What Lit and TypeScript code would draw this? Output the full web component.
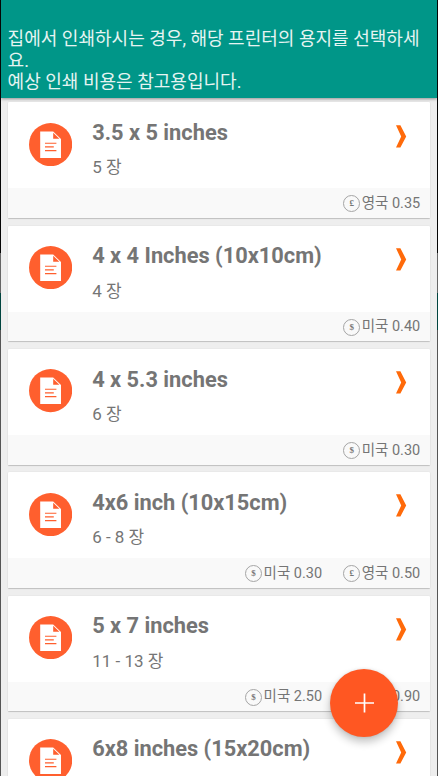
import { LitElement, html, css, svg, nothing } from 'lit';
import { customElement, property } from 'lit/decorators.js';

interface Price { sign: string; country: string; amount: string }
interface Paper { title: string; count?: string; prices: Price[] }

const us = (amount: string): Price => ({ sign: '$', country: '미국', amount });
const uk = (amount: string): Price => ({ sign: '£', country: '영국', amount });

const PAPERS: Paper[] = [
  { title: '3.5 x 5 inches', count: '5 장', prices: [uk('0.35')] },
  { title: '4 x 4 Inches (10x10cm)', count: '4 장', prices: [us('0.40')] },
  { title: '4 x 5.3 inches', count: '6 장', prices: [us('0.30')] },
  { title: '4x6 inch (10x15cm)', count: '6 - 8 장', prices: [us('0.30'), uk('0.50')] },
  { title: '5 x 7 inches', count: '11 - 13 장', prices: [us('2.50'), uk('0.90')] },
  { title: '6x8 inches (15x20cm)', prices: [] },
];

const docIcon = svg`
  <circle cx="21.6" cy="21.6" r="21.6" fill="#ff5f2e"/>
  <path d="M11.2 8.4H24.2L32 16V35H11.2Z" fill="#fff"/>
  <path d="M24.2 9.8V15.8H30.4Z" fill="#ff5f2e"/>
  <path d="M16 20.2H27.4M16 23.9H24.8M16 27.6H27.4" stroke="#ff5f2e" stroke-width="1.1" fill="none"/>`;

@customElement('paper-card')
export class PaperCard extends LitElement {
  @property({ attribute: false }) paper!: Paper;

  static styles = css`
    :host {
      display: block;
      flex: none;
      height: 115.6px;
      background: #fff;
      border-radius: 1px;
      box-shadow: 0 1px 1px rgba(0, 0, 0, 0.18), 0 0 1.5px rgba(0, 0, 0, 0.1);
      color: #757575;
    }
    .body {
      display: flex;
      height: 86px;
      box-sizing: border-box;
      padding: 20.4px 23px 0 20.4px;
    }
    .doc { width: 43.2px; height: 43.2px; flex: none; }
    .text { flex: 1; margin-left: 20.4px; }
    .title {
      margin-top: -2.8px;
      font-size: 21.8px;
      font-weight: 700;
      line-height: 26px;
      white-space: nowrap;
    }
    .count { margin-top: 10.4px; font-size: 17px; line-height: 22px; }
    .chevron { width: 12px; height: 24px; flex: none; margin-top: 0.8px; }
    .foot {
      display: flex;
      justify-content: flex-end;
      align-items: center;
      gap: 21px;
      height: 29.6px;
      box-sizing: border-box;
      padding: 1.6px 9.4px 0 0;
      background: #f9f9f9;
      font-size: 14.5px;
    }
    .price { display: flex; align-items: center; gap: 1.5px; white-space: nowrap; line-height: 20px; }
    .sign {
      display: flex;
      align-items: center;
      justify-content: center;
      width: 17px;
      height: 17px;
      box-sizing: border-box;
      border: 1px solid #a5a5a5;
      border-radius: 50%;
      font-family: 'Liberation Serif', serif;
      font-size: 9px;
      font-weight: 700;
      line-height: 9px;
    }
  `;

  render() {
    const { title, count, prices } = this.paper;
    return html`
      <div class="body">
        <svg class="doc" viewBox="0 0 43.2 43.2">${docIcon}</svg>
        <div class="text">
          <div class="title">${title}</div>
          ${count ? html`<div class="count">${count}</div>` : nothing}
        </div>
        <svg class="chevron" viewBox="0 0 12 24">
          <path d="M1 1.2H5.4L11.2 12.4L5.4 23.6H1L6.2 12.4Z" fill="#ff6a0a"/>
        </svg>
      </div>
      <div class="foot">
        ${prices.map(p => html`
          <div class="price"><span class="sign">${p.sign}</span><span>${p.country} ${p.amount}</span></div>`)}
      </div>`;
  }
}

@customElement('app-root')
export class AppRoot extends LitElement {
  static styles = css`
    :host {
      display: block;
      position: relative;
      box-sizing: border-box;
      width: 438px;
      height: 776px;
      overflow: hidden;
      padding: 0 1px;
      background: linear-gradient(#050505 0 253px, #666 253px 293px, #00443f 293px 330px, #555 330px);
      font-family: Roboto, 'Noto Sans CJK KR', sans-serif;
    }
    .screen { display: flex; flex-direction: column; height: 776px; background: #eee; overflow: hidden; }
    .header {
      flex: none;
      box-sizing: border-box;
      height: 98px;
      padding: 28px 0 0 6.6px;
      background: #009688;
      box-shadow: 0 1px 3px rgba(0, 0, 0, 0.4);
      color: #e6f4f2;
      font-size: 18.04px;
      line-height: 21.5px;
    }
    .header div { white-space: nowrap; }
    .list { display: flex; flex-direction: column; gap: 7.7px; padding: 4.4px 7.4px 0 7.2px; }
    .fab {
      position: absolute;
      left: 330px;
      top: 669px;
      width: 68px;
      height: 68px;
      border-radius: 50%;
      background: #ff5722;
      box-shadow: 0 5px 9px rgba(0, 0, 0, 0.24), 0 0 3px rgba(0, 0, 0, 0.1);
    }
    .fab svg { display: block; width: 68px; height: 68px; }
  `;

  render() {
    return html`
      <div class="screen">
        <div class="header">
          <div>집에서 인쇄하시는 경우, 해당 프린터의 용지를 선택하세</div>
          <div>요.</div>
          <div>예상 인쇄 비용은 참고용입니다.</div>
        </div>
        <div class="list">
          ${PAPERS.map(p => html`<paper-card .paper=${p}></paper-card>`)}
        </div>
      </div>
      <div class="fab">
        <svg viewBox="0 0 68 68"><path d="M25 34H44M34.5 24.5V43.5" stroke="#fff" stroke-width="1.7"/></svg>
      </div>`;
  }
}
